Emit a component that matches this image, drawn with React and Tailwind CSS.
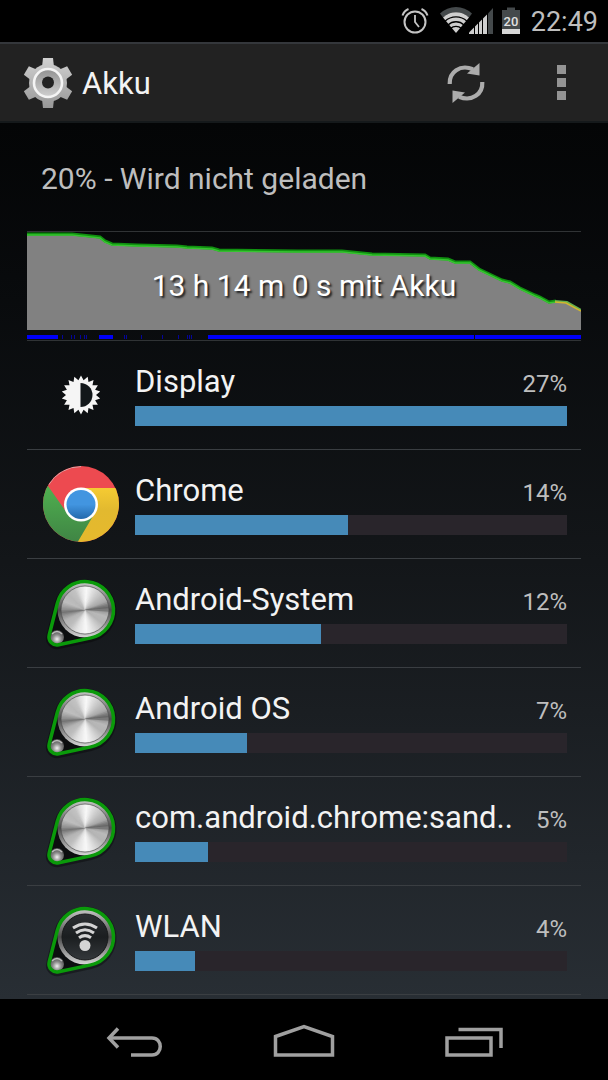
import React from 'react';

const rows = [
  { name: 'Display', percent: 27, fill: 100, icon: 'display' },
  { name: 'Chrome', percent: 14, fill: 49.2, icon: 'chrome' },
  { name: 'Android-System', percent: 12, fill: 43.1, icon: 'metal' },
  { name: 'Android OS', percent: 7, fill: 26, icon: 'metal' },
  { name: 'com.android.chrome:sand..', percent: 5, fill: 17, icon: 'metal' },
  { name: 'WLAN', percent: 4, fill: 14, icon: 'wifi' },
];

function AlarmIcon() {
  return (
    <svg className="h-7 w-7" viewBox="0 0 28 28" fill="none" stroke="#c4c4c4" aria-hidden="true">
      <circle cx="14" cy="15" r="10.5" strokeWidth="2" />
      <path d="M14 8v7l4 5" strokeWidth="1.8" />
      <path d="M1.5 8.5C2.5 5.5 4.5 3.2 7.5 2M26.5 8.5C25.5 5.5 23.5 3.2 20.5 2" strokeWidth="2" />
    </svg>
  );
}

function SignalIcon() {
  return (
    <svg className="h-7 w-14" viewBox="0 0 56 28" aria-hidden="true">
      <path d="M1 6.5A23 23 0 0 1 33 6.5L30 10.5A19 19 0 0 0 4 10.5Z" fill="#44494b" />
      <path d="M4 10.5A19 19 0 0 1 30 10.5L17 26Z" fill="#cfcfcf" />
      <g fill="none" stroke="#000" strokeWidth="1.3">
        <path d="M6 14.3A16 16 0 0 1 28 14.3" />
        <path d="M9 18A11.5 11.5 0 0 1 25 18" />
        <path d="M11.5 21.5A8 8 0 0 1 22.5 21.5" />
      </g>
      <path d="M49 6.5L54 1V27H49Z" fill="#44494b" />
      <path d="M30 27V25.5L48 7.5V27Z" fill="#cfcfcf" />
      <path d="M35.5 19V27M39.5 15V27M43.500 11V27" stroke="#000" strokeWidth="1" />
    </svg>
  );
}

function BatteryIcon() {
  return (
    <svg className="h-7 w-5" viewBox="0 0 20 28" aria-hidden="true">
      <path d="M6 0.5H14V3H19V22H1V3H6Z" fill="#44494b" />
      <rect x="1" y="22" width="18" height="5" fill="#d6d6d6" />
      <text x="10" y="18.500" textAnchor="middle" fontSize="13" fontWeight="500" fill="#e0e0e0" fontFamily="Roboto, sans-serif">20</text>
    </svg>
  );
}

function GearIcon() {
  const teeth = [0, 60, 120, 180, 240, 300];
  return (
    <svg className="h-13 w-13" viewBox="0 0 52 52" aria-hidden="true">
      <defs>
        <linearGradient id="gear" x1="0" y1="0" x2="0" y2="52" gradientUnits="userSpaceOnUse">
          <stop offset="0" stopColor="#d2d2d2" />
          <stop offset="1" stopColor="#979797" />
        </linearGradient>
        <linearGradient id="hub" x1="0" y1="0" x2="0" y2="1">
          <stop offset="0" stopColor="#929292" />
          <stop offset="1" stopColor="#cfcfcf" />
        </linearGradient>
      </defs>
      <mask id="gearShape">
        <circle cx="26" cy="26" r="19" fill="#fff" />
        {teeth.map((a) => (
          <path key={a} d="M20 10L21 1H31L32 10Z" fill="#fff" transform={`rotate(${a} 26 26)`} />
        ))}
      </mask>
      <rect width="52" height="52" fill="url(#gear)" mask="url(#gearShape)" />
      <circle cx="26" cy="26" r="14" fill="url(#hub)" stroke="#f4f4f4" strokeWidth="2.6" />
      <circle cx="26" cy="25.5" r="6" fill="#222" />
    </svg>
  );
}

function RefreshIcon() {
  return (
    <svg className="h-10 w-10" viewBox="0 0 40 40" aria-hidden="true">
      <path d="M3.7 21C3 9 14 1 27 6.2" fill="none" stroke="#acacac" strokeWidth="4.2" />
      <path d="M33.5 0V12.5L21 10.5Z" fill="#acacac" />
      <path d="M36.3 19C37 31 26 39 13 33.8" fill="none" stroke="#acacac" strokeWidth="4.2" />
      <path d="M6.5 40V27.5L19 29.5Z" fill="#acacac" />
    </svg>
  );
}

function DisplayIcon() {
  const points = Array.from({ length: 36 }, (_, i) => {
    const r = i % 2 ? 15 : 19.5;
    const a = (i * 10 - 90) * (Math.PI / 180);
    return `${(38 + r * Math.cos(a)).toFixed(2)},${(38 + r * Math.sin(a)).toFixed(2)}`;
  }).join(' ');
  return (
    <svg className="h-19 w-19" viewBox="0 0 76 76" aria-hidden="true">
      <polygon points={points} fill="#f5f5f5" />
      <path d="M37.5 26A12 12 0 0 1 37.5 50Z" fill="#12171a" />
    </svg>
  );
}

function ChromeIcon() {
  return (
    <svg className="h-19 w-19" viewBox="0 0 76 76" aria-hidden="true">
      <defs>
        <linearGradient id="cGreen" x1="0" y1="0" x2="0" y2="1">
          <stop offset="0" stopColor="#4fb04f" />
          <stop offset="1" stopColor="#3f8344" />
        </linearGradient>
        <linearGradient id="cYellow" x1="0" y1="0" x2="0" y2="1">
          <stop offset="0" stopColor="#f5cb33" />
          <stop offset="0.4" stopColor="#e2b92f" />
          <stop offset="1" stopColor="#e6b92d" />
        </linearGradient>
        <linearGradient id="cBlue" x1="0" y1="0" x2="0" y2="1">
          <stop offset="0.5" stopColor="#4295e0" />
          <stop offset="1" stopColor="#2369ac" />
        </linearGradient>
        <clipPath id="cDisc"><circle cx="38" cy="38" r="38" /></clipPath>
      </defs>
      <g clipPath="url(#cDisc)">
        <rect width="76" height="76" fill="#ed4a50" />
        <path d="M5 20L24 47L38 54L52 50L34 78H-2V20Z" fill="url(#cGreen)" />
        <path d="M38 22H78V78H33.5L50 50Z" fill="url(#cYellow)" />
        <path d="M5.5 19A37.5 37.5 0 0 1 38 0.5" fill="none" stroke="#d7a5a6" strokeWidth="1" />
      </g>
      <circle cx="38" cy="38.5" r="17" fill="#fff" />
      <circle cx="38" cy="38.5" r="14.5" fill="url(#cBlue)" />
    </svg>
  );
}

const shades = [
  [0, 150], [15, 185], [35, 180], [60, 215], [85, 248], [110, 225],
  [130, 190], [150, 180], [162, 150], [172, 115], [182, 150], [200, 190], [220, 185],
  [240, 195], [255, 225], [272, 248], [295, 215], [320, 185], [335, 170], [345, 125], [353, 100], [360, 150],
];

function shadeAt(angle) {
  const i = shades.findIndex(([a]) => a > angle);
  const [a0, v0] = shades[i - 1];
  const [a1, v1] = shades[i];
  return Math.round(v0 + ((v1 - v0) * (angle - a0)) / (a1 - a0));
}

function Brushed({ cx, cy, r }) {
  return Array.from({ length: 90 }, (_, i) => {
    const a = (i * 4 * Math.PI) / 180;
    const b = ((i * 4 + 8) * Math.PI) / 180;
    const v = shadeAt(i * 4);
    const p = (t) => `${(cx + r * Math.cos(t)).toFixed(2)} ${(cy + r * Math.sin(t)).toFixed(2)}`;
    return <path key={i} d={`M${cx} ${cy}L${p(a)}L${p(b)}Z`} fill={`rgb(${v},${v},${v})`} />;
  });
}

function KnobIcon({ id, wifi }) {
  return (
    <svg className="h-19 w-19" viewBox="0 0 76 76" aria-hidden="true">
      <defs>
        <linearGradient id={`${id}rim`} x1="0" y1="0" x2="0" y2="1">
          <stop offset="0" stopColor="#c4c4c4" />
          <stop offset="0.5" stopColor="#4c4c4c" />
          <stop offset="1" stopColor="#d6d6d6" />
        </linearGradient>
        <linearGradient id={`${id}face`} x1="0" y1="0" x2="0" y2="1">
          <stop offset="0" stopColor="#2c3033" />
          <stop offset="0.5" stopColor="#1b1e20" />
          <stop offset="1" stopColor="#34383b" />
        </linearGradient>
        <radialGradient id={`${id}ball`} cx="0.5" cy="0.65" r="0.6">
          <stop offset="0" stopColor="#f2f2f2" />
          <stop offset="0.5" stopColor="#8d8d8d" />
          <stop offset="1" stopColor="#4a4a4a" />
        </radialGradient>
      </defs>
      <path d="M14.4 29A28.5 28.5 0 1 1 48 64L15.7 71A8 8 0 0 1 6.2 61Z" fill="none" stroke="#000" strokeOpacity="0.35" strokeWidth="6" />
      <circle cx="42" cy="35" r="28" fill="#0c0e0f" />
      <path d="M14.4 28L48 62.9L15.7 69.8A8 8 0 0 1 6.2 60Z" fill="#0c0e0f" />
      <circle cx="42" cy="35" r="27.5" fill={`url(#${id}rim)`} />
      {wifi ? (
        <>
          <circle cx="42" cy="35" r="23" fill={`url(#${id}face)`} stroke="#17191a" strokeWidth="1" />
          <g fill="none" stroke="#d4d4d4" strokeWidth="3">
            <path d="M30 26Q42 18 54 26" />
            <path d="M33 31Q42 24.5 51 31" />
            <path d="M36 35.8Q42 31.5 48 35.8" />
          </g>
          <circle cx="42" cy="43.5" r="5.5" fill="#d4d4d4" />
        </>
      ) : (
        <>
          <Brushed cx={42} cy={35} r={24} />
          <circle cx="42" cy="35" r="24" fill="none" stroke="#4a4a4a" strokeOpacity="0.7" strokeWidth="1" />
        </>
      )}
      <circle cx="14" cy="62" r="7" fill={`url(#${id}ball)`} />
      <path d="M9 59Q14 54 19 59" fill="none" stroke="#bcbcbc" strokeWidth="1.5" />
      <path d="M14.4 28A28.5 28.5 0 1 1 48 62.9L15.7 69.8A8 8 0 0 1 6.2 60Z" fill="none" stroke="#0a9a0a" strokeWidth="3.5" />
    </svg>
  );
}

function RowIcon({ type, index }) {
  if (type === 'display') return <DisplayIcon />;
  if (type === 'chrome') return <ChromeIcon />;
  return <KnobIcon id={`knob${index}`} wifi={type === 'wifi'} />;
}

const curve =
  'M0 2L45 2L73 5L78 9L85 12L110 13L150 14L160 15L185 16L192 18L270 19L315 19L345 22L398 23L403 26L421 27L428 30L443 30L452 37L475 48L483 50L493 56L508 63L513 65L522 70';

const ticks = [35, 44, 47, 53, 57, 59, 97, 99, 114, 135, 151, 160, 162, 164];

function HistoryChart() {
  return (
    <svg className="block h-27 w-full" viewBox="0 0 554 108" preserveAspectRatio="none" aria-hidden="true">
      <path d={`${curve}L530 70L541 71L554 79V98H0Z`} fill="#818181" />
      <path d={`${curve}L529 69`} fill="none" stroke="#109010" strokeWidth="3" />
      <path d={`${curve}L529 69`} fill="none" stroke="#35c52f" strokeWidth="1.5" transform="translate(0 1)" />
      <path d="M528 69L540 70L554 78" fill="none" stroke="#63b04e" strokeWidth="2" />
      <path d="M528 70L539 71L554 79" fill="none" stroke="#d2b72c" strokeWidth="1.5" />
      <g fill="#0000fa">
        <rect x="0" y="103" width="31" height="4" />
        <rect x="72" y="103" width="14" height="4" />
        <rect x="181" y="103" width="266" height="4" />
        <rect x="448" y="103" width="106" height="4" />
        {ticks.map((x) => (
          <rect key={x} x={x} y="103" width="1" height="4" fillOpacity="0.6" />
        ))}
      </g>
    </svg>
  );
}

export default function App() {
  return (
    <div className="flex min-h-screen flex-col bg-black font-['Roboto',sans-serif] text-[#f3f3f3]">
      <div className="flex h-[42px] items-center justify-end pr-[10px] text-[27px] text-[#bebebe]">
        <AlarmIcon />
        <span className="ml-[10px]"><SignalIcon /></span>
        <span className="ml-[6px]"><BatteryIcon /></span>
        <time className="ml-[10px] pt-[2px] leading-8">22:49</time>
      </div>

      <header className="flex h-[81px] items-center border-t-2 border-b-2 border-t-[#34373b] border-b-[#15191b] bg-[#222222] pl-[22px]">
        <GearIcon />
        <h1 className="ml-2 flex-1 pt-[2px] text-[31px] leading-9">Akku</h1>
        <button type="button" aria-label="Aktualisieren" className="flex h-full w-20 items-center justify-center">
          <RefreshIcon />
        </button>
        <button type="button" aria-label="Weitere Optionen" className="ml-2 flex h-full w-[94px] flex-col items-center justify-center gap-[4px]">
          <span className="size-[9px] bg-[#949494]" />
          <span className="size-[9px] bg-[#949494]" />
          <span className="size-[9px] bg-[#949494]" />
        </button>
      </header>

      <main className="flex-1 bg-linear-to-b from-[#040506] via-[#131619] to-[#282e34] px-[27px]">
        <p className="flex h-[108px] items-center px-[14px] pt-1 text-[30px] leading-9 text-[#bebebe]">20% - Wird nicht geladen</p>

        <section className="relative border-t border-b border-[#303335]">
          <HistoryChart />
          <p className="absolute inset-x-0 top-9 text-center text-[30px] leading-9 text-white [text-shadow:2px_2px_2px_#222]">
            13 h 14 m 0 s mit Akku
          </p>
        </section>

        <ul>
          {rows.map((row, i) => (
            <li key={row.name} className="flex h-[109px] items-center gap-4 border-b border-[#3a3e42] pr-[14px] pl-4">
              <RowIcon type={row.icon} index={i} />
              <div className="min-w-0 flex-1">
                <div className="flex items-baseline justify-between">
                  <span className="text-[31px] leading-9 whitespace-nowrap">{row.name}</span>
                  <span className="text-[24px] leading-9 text-[#bebebe]">{row.percent}%</span>
                </div>
                <div
                  role="progressbar"
                  aria-label={row.name}
                  aria-valuenow={row.percent}
                  className="mt-1 h-5 bg-[#29252b]"
                >
                  <div className="h-full bg-[#468ab8]" style={{ width: `${row.fill}%` }} />
                </div>
              </div>
            </li>
          ))}
        </ul>
      </main>

      <nav className="flex h-[81px] items-center justify-center gap-[50px] bg-black pt-[2px]" aria-label="Systemnavigation">
        <button type="button" aria-label="Zurück" className="flex h-full w-[120px] items-center justify-center">
          <svg className="h-[34px] w-14" viewBox="0 0 56 34" fill="none" stroke="#a0a0a0" strokeWidth="3.5" aria-hidden="true">
            <path d="M3 14H46C57 14 57 31 46 31H25" />
            <path d="M12 4.5L3 14L12 23.5" />
          </svg>
        </button>
        <button type="button" aria-label="Startseite" className="flex h-full w-[120px] items-center justify-center">
          <svg className="h-[34px] w-16" viewBox="0 0 64 34" fill="none" stroke="#a0a0a0" strokeWidth="3.5" aria-hidden="true">
            <path d="M3.5 12.5L32 2.5L60.5 12.5V31H3.5Z" />
          </svg>
        </button>
        <button type="button" aria-label="Letzte Apps" className="flex h-full w-[120px] items-center justify-center">
          <svg className="h-[34px] w-[60px]" viewBox="0 0 60 34" fill="none" stroke="#a0a0a0" strokeWidth="3.5" aria-hidden="true">
            <rect x="3" y="14" width="44" height="17" />
            <path d="M14.5 5.5H57V24" />
          </svg>
        </button>
      </nav>
    </div>
  );
}
